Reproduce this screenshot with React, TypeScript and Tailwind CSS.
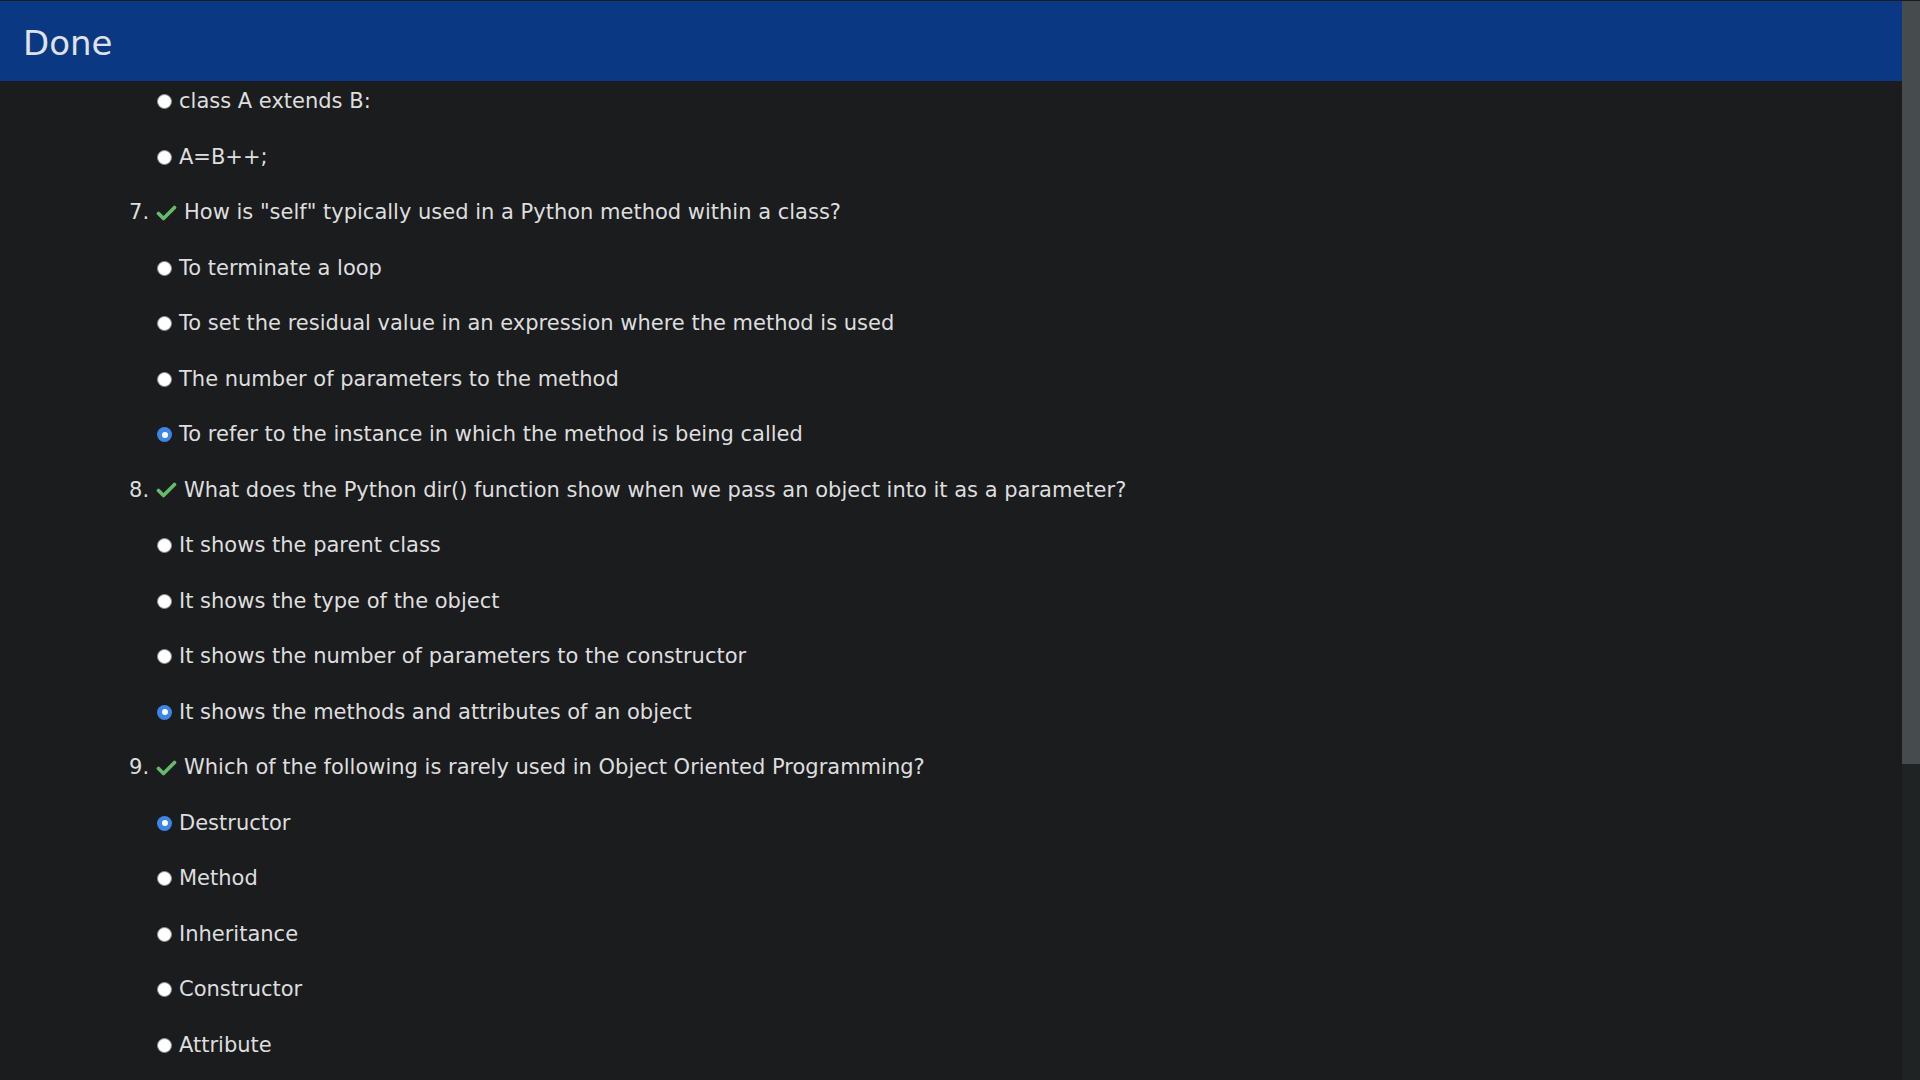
import React from "react";

type Row =
  | { kind: "opt"; text: string; selected?: boolean }
  | { kind: "q"; num: number; text: string };

const rows: Row[] = [
  { kind: "opt", text: "class A extends B:" },
  { kind: "opt", text: "A=B++;" },
  { kind: "q", num: 7, text: 'How is "self" typically used in a Python method within a class?' },
  { kind: "opt", text: "To terminate a loop" },
  { kind: "opt", text: "To set the residual value in an expression where the method is used" },
  { kind: "opt", text: "The number of parameters to the method" },
  { kind: "opt", text: "To refer to the instance in which the method is being called", selected: true },
  { kind: "q", num: 8, text: "What does the Python dir() function show when we pass an object into it as a parameter?" },
  { kind: "opt", text: "It shows the parent class" },
  { kind: "opt", text: "It shows the type of the object" },
  { kind: "opt", text: "It shows the number of parameters to the constructor" },
  { kind: "opt", text: "It shows the methods and attributes of an object", selected: true },
  { kind: "q", num: 9, text: "Which of the following is rarely used in Object Oriented Programming?" },
  { kind: "opt", text: "Destructor", selected: true },
  { kind: "opt", text: "Method" },
  { kind: "opt", text: "Inheritance" },
  { kind: "opt", text: "Constructor" },
  { kind: "opt", text: "Attribute" },
];

function Radio({ selected }: { selected?: boolean }) {
  if (selected) {
    return (
      <span className="w-[15px] h-[15px] rounded-full bg-[#3d86e8] flex items-center justify-center shrink-0">
        <span className="w-[6px] h-[6px] rounded-full bg-white" />
      </span>
    );
  }
  return <span className="w-[15px] h-[15px] rounded-full bg-white border border-[#8a8a8a] shrink-0" />;
}

function Check() {
  return (
    <svg width="21" height="16" viewBox="0 0 21 16" className="shrink-0">
      <polyline
        points="2.5,8.5 7.5,13.5 18.5,2.5"
        fill="none"
        stroke="#66bb6a"
        strokeWidth="3.6"
        strokeLinecap="round"
        strokeLinejoin="round"
      />
    </svg>
  );
}

export default function App() {
  return (
    <div
      className="w-[1920px] h-[1080px] overflow-hidden bg-[#1b1c1e] pt-[1px] flex text-[#dedede]"
      style={{ fontFamily: '"DejaVu Sans", sans-serif' }}
    >
      <div className="flex-1 flex flex-col min-w-0 overflow-hidden">
        <header className="h-[80px] bg-[#0a3882] flex items-center pl-[23px] pt-[4px] shrink-0 relative z-10">
          <span className="text-[34px] text-[#dfe2e8] leading-none">Done</span>
        </header>
        <div className="-mt-[7px] flex flex-col">
          {rows.map((r, i) =>
            r.kind === "q" ? (
              <div key={i} className="h-[55.5px] flex items-center text-[21px] shrink-0">
                <span className="w-[156px] pl-[129px]">{r.num}.</span>
                <Check />
                <span className="ml-[7px]">{r.text}</span>
              </div>
            ) : (
              <div key={i} className="h-[55.5px] flex items-center text-[21px] pl-[157px] shrink-0">
                <Radio selected={r.selected} />
                <span className="ml-[7px]">{r.text}</span>
              </div>
            )
          )}
        </div>
      </div>
      <div className="w-[18px] flex flex-col bg-[#1f2324] shrink-0">
        <div className="h-[763px] bg-[#464b4e]" />
      </div>
    </div>
  );
}
